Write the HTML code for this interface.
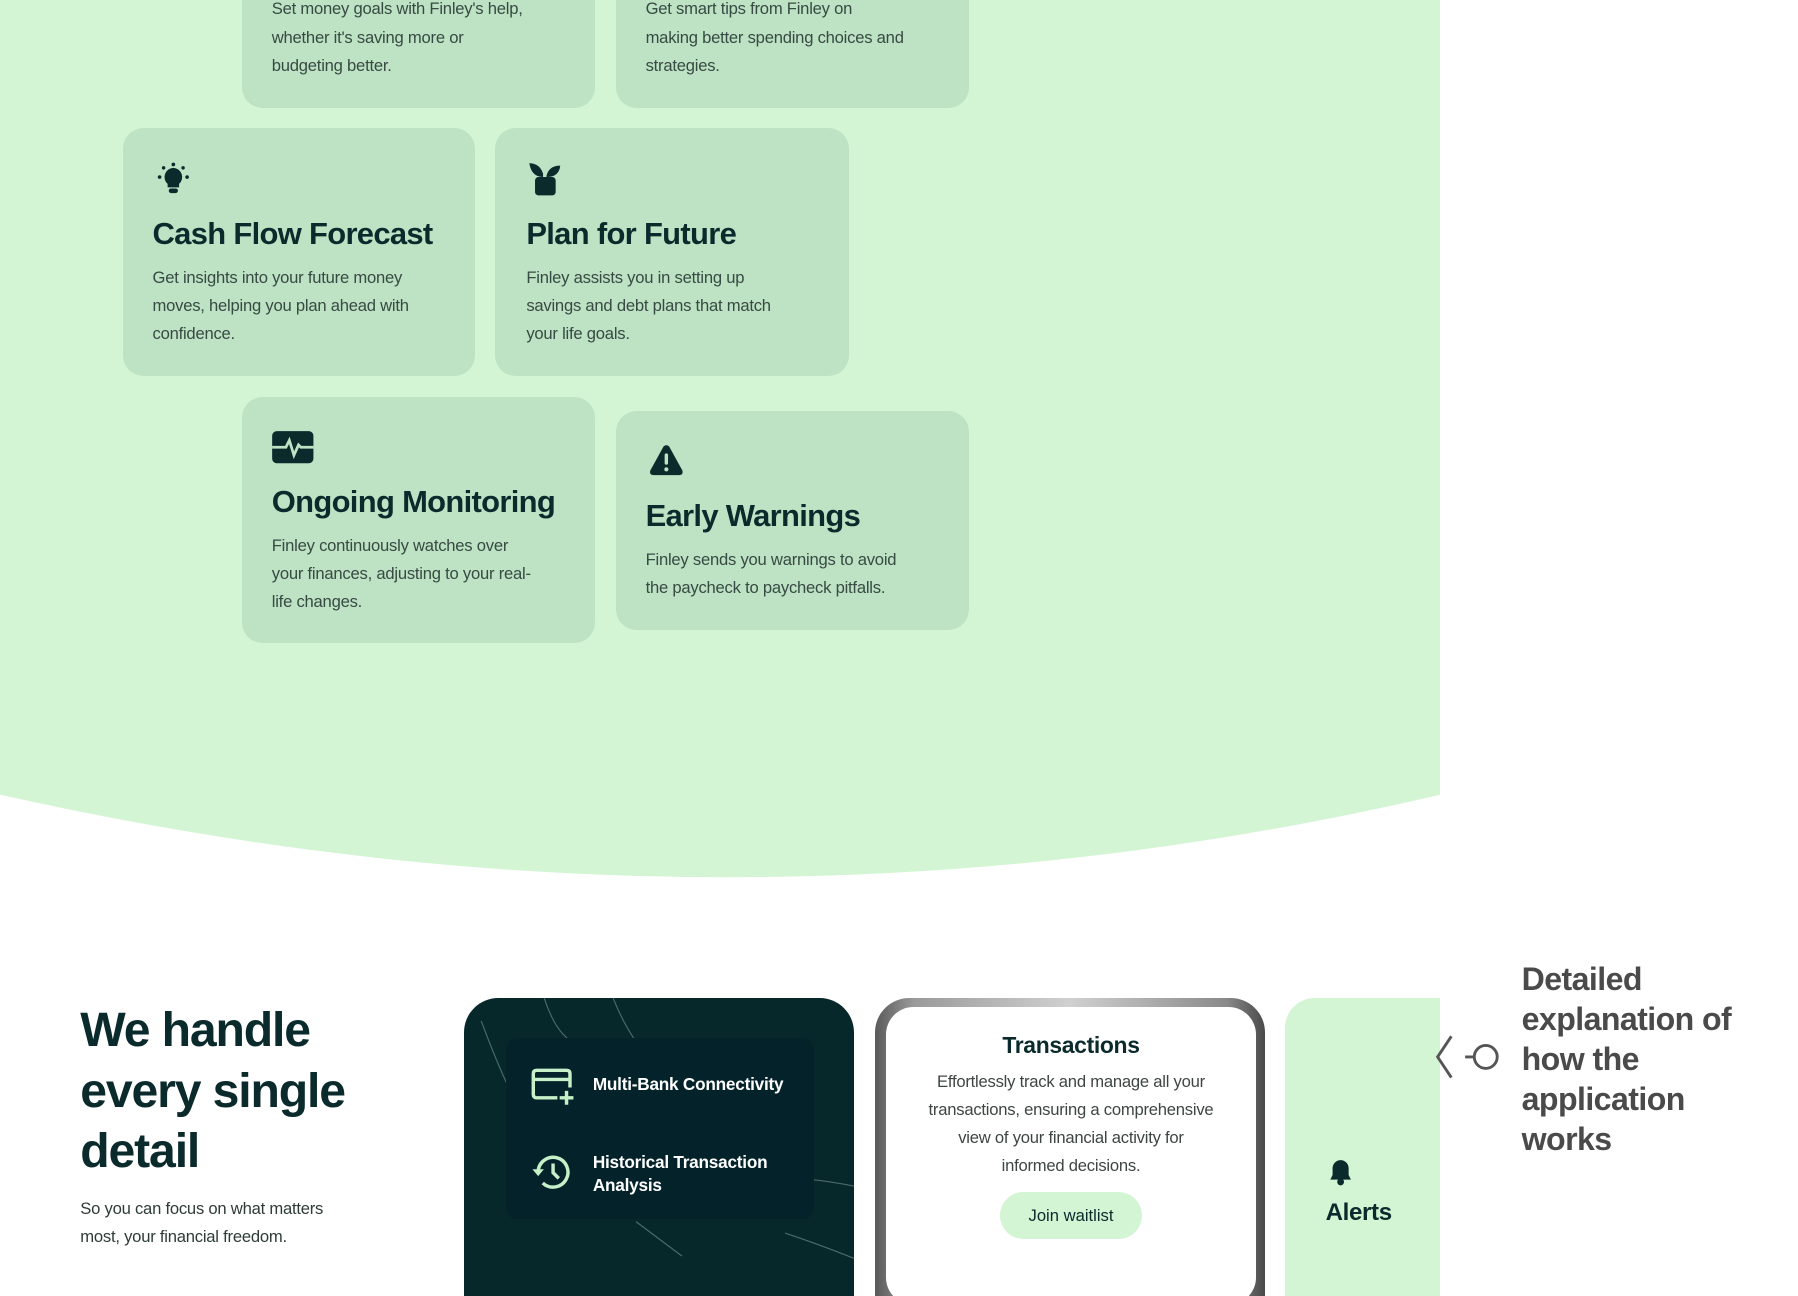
<!DOCTYPE html>
<html><head><meta charset="utf-8">
<style>
html,body{margin:0;padding:0;background:#fff;}
body{width:1568px;height:1090px;overflow:hidden;position:relative;zoom:1.1467;font-family:"Liberation Sans",sans-serif;}
.abs{position:absolute;}
.card{position:absolute;background:#bee3c4;border-radius:18px;box-sizing:border-box;padding:0 26px;}
.card h3{margin:0;font-size:27px;font-weight:700;color:#0a2a2c;letter-spacing:-0.6px;white-space:nowrap;}
.card p{margin:0;font-size:14.5px;line-height:24.5px;color:#374a43;white-space:nowrap;letter-spacing:-0.2px;}
.ic{position:absolute;}
</style></head><body>
<svg class="abs" style="left:0;top:0" width="1256" height="770"><path d="M0 0H1256V693Q640 837 0 693Z" fill="#d3f5d4"/></svg>

<div class="card" style="left:211px;top:-40px;width:308px;height:134px;"><p style="position:absolute;left:26px;top:36px;">Set money goals with Finley's help,<br>whether it's saving more or<br>budgeting better.</p></div>
<div class="card" style="left:537px;top:-40px;width:308px;height:134px;"><p style="position:absolute;left:26px;top:36px;">Get smart tips from Finley on<br>making better spending choices and<br>strategies.</p></div>

<div class="card" style="left:107px;top:112px;width:307px;height:216px;">
<svg class="ic" style="left:28px;top:28px" width="32" height="32" viewBox="0 0 32 32"><circle cx="16" cy="3" r="1.6" fill="#0a2a2c"/><circle cx="4" cy="14" r="1.6" fill="#0a2a2c"/><circle cx="28" cy="14" r="1.6" fill="#0a2a2c"/><circle cx="7.5" cy="6" r="1.5" fill="#0a2a2c"/><circle cx="24.5" cy="6" r="1.5" fill="#0a2a2c"/><path d="M16 6a8 8 0 0 0-5 14v3h10v-3a8 8 0 0 0-5-14z" fill="#0a2a2c"/><rect x="12" y="24" width="8" height="4" rx="2" fill="#0a2a2c"/></svg>
<h3 style="position:absolute;left:26px;top:76px;">Cash Flow Forecast</h3>
<p style="position:absolute;left:26px;top:118px;">Get insights into your future money<br>moves, helping you plan ahead with<br>confidence.</p></div>

<div class="card" style="left:432px;top:112px;width:308px;height:216px;">
<svg class="ic" style="left:28px;top:28px" width="32" height="32" viewBox="0 0 32 32"><path d="M2 2q9 0 12 9v3q-10 0-12-12z" fill="#0a2a2c"/><path d="M29 4q-10 0-12 9v1q11 0 12-10z" fill="#0a2a2c"/><rect x="7" y="14" width="18" height="16" rx="3" fill="#0a2a2c"/></svg>
<h3 style="position:absolute;left:27px;top:76px;">Plan for Future</h3>
<p style="position:absolute;left:27px;top:118px;">Finley assists you in setting up<br>savings and debt plans that match<br>your life goals.</p></div>

<div class="card" style="left:211px;top:346px;width:308px;height:215px;">
<svg class="ic" style="left:25px;top:29px" width="38" height="30" viewBox="0 0 38 30"><rect x="1" y="1" width="36" height="28" rx="4" fill="#0a2a2c"/><path d="M1 15h12l3-6 4 13 4-9 2 2h11" stroke="#bee3c4" stroke-width="2.4" fill="none"/></svg>
<h3 style="position:absolute;left:26px;top:76px;">Ongoing Monitoring</h3>
<p style="position:absolute;left:26px;top:118px;">Finley continuously watches over<br>your finances, adjusting to your real-<br>life changes.</p></div>

<div class="card" style="left:537px;top:358px;width:308px;height:191px;">
<svg class="ic" style="left:28px;top:28px" width="32" height="30" viewBox="0 0 32 30"><path d="M16 2q2 0 3 2l11 20q1 4-3 4H5q-4 0-3-4L13 4q1-2 3-2z" fill="#0a2a2c"/><rect x="14.5" y="9" width="3" height="10" rx="1.5" fill="#bee3c4"/><circle cx="16" cy="23" r="1.8" fill="#bee3c4"/></svg>
<h3 style="position:absolute;left:26px;top:76px;">Early Warnings</h3>
<p style="position:absolute;left:26px;top:118px;">Finley sends you warnings to avoid<br>the paycheck to paycheck pitfalls.</p></div>

<div class="abs" style="left:70px;top:872px;font-size:42px;line-height:53px;font-weight:700;color:#0a2a2c;letter-spacing:-1px;white-space:nowrap">We handle<br>every single<br>detail</div>
<div class="abs" style="left:70px;top:1042px;font-size:14.5px;line-height:24.5px;color:#2e3c38;white-space:nowrap;letter-spacing:-0.2px">So you can focus on what matters<br>most, your financial freedom.</div>

<div class="abs" style="left:405px;top:870px;width:340px;height:260px;background:#06282b;border-radius:30px 30px 0 0;overflow:hidden">
<svg class="abs" style="left:0;top:0" width="340" height="230"><g stroke="#5d7c7c" stroke-width="1" fill="none" opacity=".8"><path d="M70 0q8 25 20 35"/><path d="M130 0q8 20 18 35"/><path d="M15 20q15 40 25 60"/><path d="M300 158q20 2 40 6"/><path d="M150 195q20 15 40 30"/><path d="M280 205q30 10 60 22"/></g></svg>
<div class="abs" style="left:36px;top:35px;width:269px;height:158px;background:#03222a;border-radius:10px"></div>
<svg class="abs" style="left:58px;top:61px" width="40" height="34" viewBox="0 0 40 34"><path d="M23 26H5q-3 0-3-3V5q0-3 3-3h26q3 0 3 3v12M2 10h32" stroke="#c5f0c8" stroke-width="3" fill="none"/><path d="M31 20v12M25 26h12" stroke="#c5f0c8" stroke-width="3"/></svg>
<div class="abs" style="left:112px;top:67px;font-size:15px;font-weight:700;color:#fff;letter-spacing:-0.2px">Multi-Bank Connectivity</div>
<svg class="abs" style="left:56px;top:135px" width="40" height="36" viewBox="0 0 40 36"><path d="M8 18a13 13 0 1 1 4 9" stroke="#c5f0c8" stroke-width="3" fill="none"/><path d="M3 15l5 6 5-6z" fill="#c5f0c8"/><path d="M21 10v8l5 5" stroke="#c5f0c8" stroke-width="3" fill="none"/></svg>
<div class="abs" style="left:112px;top:134px;font-size:15px;line-height:20px;font-weight:700;color:#fff;letter-spacing:-0.2px">Historical Transaction<br>Analysis</div>
</div>

<div class="abs" style="left:763px;top:870px;width:340px;height:260px;background:linear-gradient(90deg,#5a5a5a,#9a9a9a 10%,#d0d0d0 50%,#8a8a8a 90%,#4a4a4a);border-radius:30px 30px 0 0;overflow:hidden">
<div class="abs" style="left:10px;top:8px;width:322px;height:260px;background:#fff;border-radius:24px;text-align:center">
<div style="margin-top:22px;font-size:20px;font-weight:700;color:#0a2a2c;letter-spacing:-0.3px">Transactions</div>
<div style="margin:8px auto 0;font-size:14.5px;line-height:24.5px;color:#3e4643;white-space:nowrap;letter-spacing:-0.2px">Effortlessly track and manage all your<br>transactions, ensuring a comprehensive<br>view of your financial activity for<br>informed decisions.</div>
<div style="margin:10px auto 0;width:124px;height:41px;line-height:41px;border-radius:21px;background:#d3f5d4;font-size:14.5px;color:#0a2a2c">Join waitlist</div>
</div></div>

<div class="abs" style="left:1121px;top:870px;width:135px;height:260px;background:#d3f5d4;border-radius:26px 0 0 0"></div>
<svg class="abs" style="left:1158px;top:1011px" width="22" height="24" viewBox="0 0 22 24"><path d="M11 1a7 7 0 0 0-7 7v6l-2 4h18l-2-4V8a7 7 0 0 0-7-7z" fill="#0a2a2c"/><circle cx="11" cy="20" r="3" fill="#0a2a2c"/></svg>
<div class="abs" style="left:1156px;top:1046px;font-size:21px;font-weight:700;color:#0a2a2c;letter-spacing:-0.3px">Alerts</div>

<svg class="abs" style="left:1250px;top:902px" width="62" height="42" viewBox="0 0 62 42"><path d="M16 2L4 20l12 18" stroke="#555" stroke-width="2.5" fill="none"/><path d="M28 20h8" stroke="#555" stroke-width="2.5"/><circle cx="46" cy="20" r="10" stroke="#555" stroke-width="2.5" fill="none"/></svg>
<div class="abs" style="left:1327px;top:836px;font-size:28px;line-height:35px;font-weight:700;color:#4a4a4a;white-space:nowrap;letter-spacing:-0.5px">Detailed<br>explanation of<br>how the<br>application<br>works</div>
</body></html>
